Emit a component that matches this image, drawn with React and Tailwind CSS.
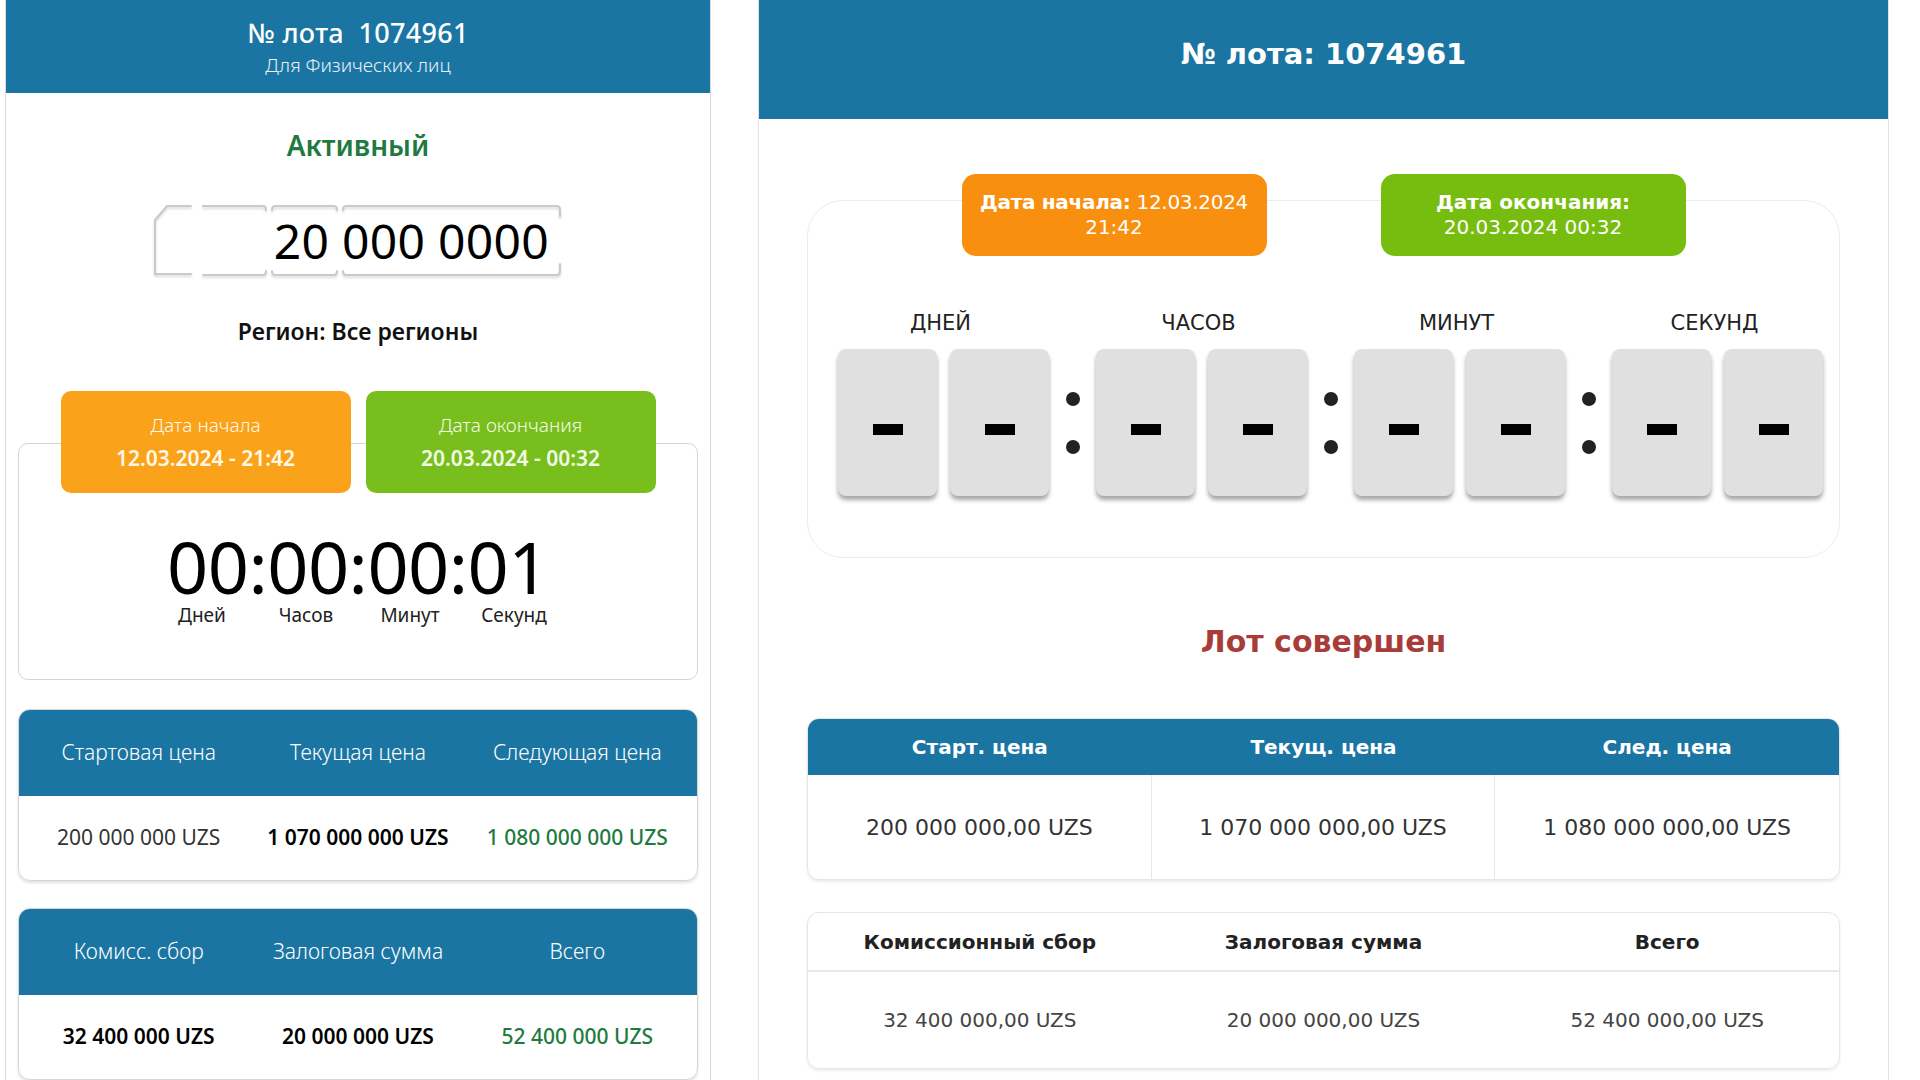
import React from 'react';

const leftFont = { fontFamily: '"Noto Sans", "Open Sans", sans-serif' };
const rightFont = { fontFamily: '"DejaVu Sans", Verdana, sans-serif' };

const Plate = () => (
    <div className="relative w-[410px] h-[74px] mx-auto flex items-center justify-end pr-[14px]">
        <svg className="absolute inset-0 drop-shadow-[0_2px_1px_rgba(0,0,0,0.15)]" width="410" height="74" viewBox="0 0 410 74" fill="none">
            <g stroke="#cacaca" strokeWidth="2" strokeLinecap="round" strokeLinejoin="round">
                {/* left segment with cut corner */}
                <path d="M38 2 L14 2 L2 16 L2 70 L38 70" />
                {/* second segment */}
                <path d="M50 2 L110 2 Q113 2 113 6" />
                <path d="M50 71 L110 71 Q113 71 113 67" />
                {/* third segment */}
                <path d="M119 6 Q119 2 122 2 L181 2 Q184 2 184 6" />
                <path d="M119 67 Q119 71 122 71 L181 71 Q184 71 184 67" />
                {/* main segment */}
                <path d="M190 6 Q190 2 193 2 L404 2 Q407 2 407 6 L407 12" />
                <path d="M190 67 Q190 71 193 71 L404 71 Q407 71 407 67 L407 60" />
            </g>
        </svg>
        <span className="relative text-[48px] leading-none text-black tracking-[0.3px]">20 000 0000</span>
    </div>
);

const LeftTable = ({ heads, values }) => (
    <div className="mx-[12px] rounded-[12px] border border-[#d6d6d6] shadow-[0_2px_3px_rgba(0,0,0,0.12)] overflow-hidden">
        <div className="grid grid-cols-3 px-[10px] h-[86px] items-center bg-[#1b75a3] text-white text-[21px] font-light text-center">
            {heads.map((h) => (
                <div key={h}>{h}</div>
            ))}
        </div>
        <div className="grid grid-cols-3 px-[10px] h-[84px] items-center text-[21px] text-center">
            {values.map((v) => (
                <div key={v.text} className={v.cls}>{v.text}</div>
            ))}
        </div>
    </div>
);

const LeftPanel = () => (
    <div className="w-[706px] ml-[5px] h-full border-x border-[#d9d9d9] flex flex-col shrink-0" style={leftFont}>
        <div className="h-[96px] bg-[#1b75a3] flex flex-col items-center justify-center text-white">
            <div className="text-[27px] font-medium leading-[34px] tracking-[0.3px]">№ лота&nbsp;&nbsp;1074961</div>
            <div className="text-[19px] font-light leading-[24px] mt-[3px] text-[#e8f1f6]">Для Физических лиц</div>
        </div>

        <div className="mt-[34px] text-center text-[28px] leading-[36px] font-semibold text-[#1f7a41]">Активный</div>

        <div className="mt-[41px]">
            <Plate />
        </div>

        <div className="mt-[38px] text-center text-[23px] leading-[30px] font-semibold text-[#111]">Регион: Все регионы</div>

        {/* dates */}
        <div className="relative z-10 mt-[45px] flex justify-center gap-[15px]">
            <div className="w-[290px] h-[102px] rounded-[10px] bg-[#fba21b] flex flex-col items-center justify-center text-[#fff8e6]">
                <div className="text-[19px] font-light leading-[24px]">Дата начала</div>
                <div className="text-[21px] font-semibold leading-[26px] mt-[8px]">12.03.2024 - 21:42</div>
            </div>
            <div className="w-[290px] h-[102px] rounded-[10px] bg-[#78bf1d] flex flex-col items-center justify-center text-[#f3fbe6]">
                <div className="text-[19px] font-light leading-[24px]">Дата окончания</div>
                <div className="text-[21px] font-semibold leading-[26px] mt-[8px]">20.03.2024 - 00:32</div>
            </div>
        </div>

        {/* timer */}
        <div className="mx-[12px] -mt-[50px] h-[241px] rounded-[10px] border border-[#d4d4d4] flex flex-col items-center pt-[89px]">
            <div className="text-[72px] leading-[66px] text-black tracking-[-0.5px]">00:00:00:01</div>
            <div className="flex mt-[4px] text-[19px] leading-[24px] text-[#222]">
                <div className="w-[104px] text-center">Дней</div>
                <div className="w-[104px] text-center">Часов</div>
                <div className="w-[104px] text-center">Минут</div>
                <div className="w-[104px] text-center">Секунд</div>
            </div>
        </div>

        <div className="mt-[29px]">
            <LeftTable
                heads={['Стартовая цена', 'Текущая цена', 'Следующая цена']}
                values={[
                    { text: '200 000 000 UZS', cls: 'text-[#333]' },
                    { text: '1 070 000 000 UZS', cls: 'text-black font-semibold' },
                    { text: '1 080 000 000 UZS', cls: 'text-[#1f7a41] font-medium' },
                ]}
            />
        </div>
        <div className="mt-[27px]">
            <LeftTable
                heads={['Комисс. сбор', 'Залоговая сумма', 'Всего']}
                values={[
                    { text: '32 400 000 UZS', cls: 'text-black font-semibold' },
                    { text: '20 000 000 UZS', cls: 'text-black font-semibold' },
                    { text: '52 400 000 UZS', cls: 'text-[#1f7a41] font-medium' },
                ]}
            />
        </div>
    </div>
);

const DigitBox = () => (
    <div className="w-[99px] h-[147px] rounded-[8px] bg-[#e0e0e0] shadow-[0_4px_4px_rgba(0,0,0,0.35)] flex items-center justify-center">
        <div className="w-[30px] h-[11px] bg-black mt-[13px]" />
    </div>
);

const Colon = () => (
    <div className="w-[47px] h-[147px] flex flex-col items-center justify-center gap-[34px]">
        <div className="w-[14px] h-[14px] rounded-full bg-[#222]" />
        <div className="w-[14px] h-[14px] rounded-full bg-[#222]" />
    </div>
);

const Group = ({ label }) => (
    <div className="flex flex-col items-center w-[211px]">
        <div className="text-[21px] leading-[24px] text-[#222] -ml-[6px]">{label}</div>
        <div className="flex gap-[13px] mt-[14px]">
            <DigitBox />
            <DigitBox />
        </div>
    </div>
);

const RightPanel = () => (
    <div className="w-[1131px] ml-[47px] h-full border-x border-[#e3e3e3] flex flex-col shrink-0" style={rightFont}>
        <div className="h-[119px] bg-[#1b75a3] flex items-center justify-center pb-[11px]">
            <div className="text-white font-bold text-[29px] leading-[36px]">№ лота: 1074961</div>
        </div>

        {/* dates */}
        <div className="relative z-10 mt-[55px] flex justify-center gap-[114px]">
            <div className="w-[305px] h-[82px] rounded-[14px] bg-[#f98f0f] flex flex-col items-center justify-center text-white text-[20px] leading-[25px] text-center">
                <div className="tracking-[-0.3px]"><span className="font-bold">Дата начала:</span> 12.03.2024</div>
                <div>21:42</div>
            </div>
            <div className="w-[305px] h-[82px] rounded-[14px] bg-[#77bd0f] flex flex-col items-center justify-center text-white text-[20px] leading-[25px] text-center">
                <div className="font-bold">Дата окончания:</div>
                <div>20.03.2024 00:32</div>
            </div>
        </div>

        <div className="mx-[48px] -mt-[56px] h-[358px] rounded-[36px] border border-[#ececec] pt-[110px] pl-[30px] flex">
            <Group label="ДНЕЙ" />
            <div className="pt-[38px]"><Colon /></div>
            <Group label="ЧАСОВ" />
            <div className="pt-[38px]"><Colon /></div>
            <Group label="МИНУТ" />
            <div className="pt-[38px]"><Colon /></div>
            <Group label="СЕКУНД" />
        </div>

        <div className="mt-[64px] text-center text-[30px] leading-[40px] font-bold text-[#a83c38]">Лот совершен</div>

        {/* price table */}
        <div className="mx-[48px] mt-[56px] rounded-[12px] border border-[#e6e6e6] shadow-[0_2px_3px_rgba(0,0,0,0.08)] overflow-hidden">
            <div className="grid grid-cols-3 h-[56px] items-center bg-[#1b75a3] text-white font-bold text-[20px] text-center">
                <div>Старт. цена</div>
                <div>Текущ. цена</div>
                <div>След. цена</div>
            </div>
            <div className="grid grid-cols-3 h-[104px] text-[22px] text-[#333] text-center divide-x divide-[#e6e6e6]">
                <div className="flex items-center justify-center">200 000 000,00 UZS</div>
                <div className="flex items-center justify-center">1 070 000 000,00 UZS</div>
                <div className="flex items-center justify-center">1 080 000 000,00 UZS</div>
            </div>
        </div>

        {/* fees table */}
        <div className="mx-[48px] mt-[32px] rounded-[12px] border border-[#e6e6e6] shadow-[0_2px_3px_rgba(0,0,0,0.08)] overflow-hidden">
            <div className="grid grid-cols-3 h-[59px] items-center border-b-2 border-[#e8e8e8] text-[#222] font-bold text-[20px] text-center">
                <div>Комиссионный сбор</div>
                <div>Залоговая сумма</div>
                <div>Всего</div>
            </div>
            <div className="grid grid-cols-3 h-[96px] items-center text-[20px] text-[#444] text-center">
                <div>32 400 000,00 UZS</div>
                <div>20 000 000,00 UZS</div>
                <div>52 400 000,00 UZS</div>
            </div>
        </div>
    </div>
);

export default function App() {
    return (
        <div className="w-[1920px] h-[1080px] overflow-hidden bg-white flex">
            <LeftPanel />
            <RightPanel />
        </div>
    );
}
